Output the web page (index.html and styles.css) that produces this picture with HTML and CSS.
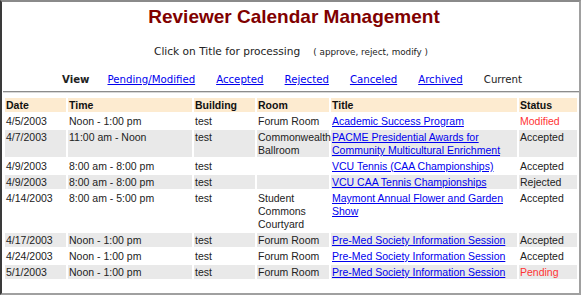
FILE: index.html
```html
<!DOCTYPE html>
<html>
<head>
<meta charset="utf-8">
<link rel="stylesheet" href="styles.css">
</head>
<body>
<div class="frame">
  <h1 class="title">Reviewer Calendar Management</h1>
  <p class="hint">Click on Title for processing<span class="small">( approve, reject, modify )</span></p>
  <div class="views">
    <b class="view-label">View</b>
    <a href="#">Pending/Modified</a>
    <a href="#">Accepted</a>
    <a href="#">Rejected</a>
    <a href="#">Canceled</a>
    <a href="#">Archived</a>
    <span class="current">Current</span>
  </div>
  <hr class="rule">
  <table class="events">
    <colgroup>
      <col class="c-date"><col class="c-time"><col class="c-bldg"><col class="c-room"><col class="c-title"><col class="c-status">
    </colgroup>
    <thead>
      <tr><th>Date</th><th>Time</th><th>Building</th><th>Room</th><th>Title</th><th>Status</th></tr>
    </thead>
    <tbody>
      <tr><td>4/5/2003</td><td>Noon - 1:00 pm</td><td>test</td><td>Forum Room</td><td><a href="#">Academic Success Program</a></td><td class="red">Modified</td></tr>
      <tr class="alt"><td>4/7/2003</td><td>11:00 am - Noon</td><td>test</td><td>Commonwealth Ballroom</td><td><a href="#">PACME Presidential Awards for Community Multicultural Enrichment</a></td><td>Accepted</td></tr>
      <tr><td>4/9/2003</td><td>8:00 am - 8:00 pm</td><td>test</td><td></td><td><a href="#">VCU Tennis (CAA Championships)</a></td><td>Accepted</td></tr>
      <tr class="alt"><td>4/9/2003</td><td>8:00 am - 8:00 pm</td><td>test</td><td></td><td><a href="#">VCU CAA Tennis Championships</a></td><td>Rejected</td></tr>
      <tr><td>4/14/2003</td><td>8:00 am - 5:00 pm</td><td>test</td><td>Student Commons Courtyard</td><td><a href="#">Maymont Annual Flower and Garden Show</a></td><td>Accepted</td></tr>
      <tr class="alt"><td>4/17/2003</td><td>Noon - 1:00 pm</td><td>test</td><td>Forum Room</td><td><a href="#">Pre-Med Society Information Session</a></td><td>Accepted</td></tr>
      <tr><td>4/24/2003</td><td>Noon - 1:00 pm</td><td>test</td><td>Forum Room</td><td><a href="#">Pre-Med Society Information Session</a></td><td>Accepted</td></tr>
      <tr class="alt"><td>5/1/2003</td><td>Noon - 1:00 pm</td><td>test</td><td>Forum Room</td><td><a href="#">Pre-Med Society Information Session</a></td><td class="red">Pending</td></tr>
    </tbody>
  </table>
</div>
</body>
</html>
```

FILE: styles.css
```css
html, body {
  margin: 0;
  padding: 0;
  background: #fff;
}

.frame {
  box-sizing: border-box;
  width: 581px;
  height: 295px;
  border-top: 2px solid #8a8a8a;
  border-left: 2px solid #3a3a3a;
  border-right: 2px solid #a0a0a0;
  border-bottom: 2px solid #a0a0a0;
  padding: 0 0 0 1px;
  overflow: hidden;
}

.title {
  margin: 3px 0 0;
  padding-left: 6px;
  font-family: "Liberation Sans", Arial, sans-serif;
  font-weight: bold;
  font-size: 19px;
  line-height: 24px;
  color: #800000;
  text-align: center;
}

.hint {
  margin: 15px 0 0;
  font-family: "DejaVu Sans", Verdana, sans-serif;
  font-size: 10.6px;
  line-height: 14px;
  color: #222;
  text-align: center;
}

.small {
  margin-left: 13px;
  font-size: 8.8px;
}

.views {
  margin: 14px 0 0;
  padding-left: 2px;
  display: flex;
  justify-content: center;
  gap: 21px;
  font-family: "DejaVu Sans", Verdana, sans-serif;
  font-size: 10.2px;
  line-height: 14px;
  color: #222;
}

.view-label {
  margin-right: -3px;
}

.views a {
  color: #0000ee;
}

.rule {
  margin: 4px 0 0;
  height: 0;
  border: 0;
  border-top: 1px solid #8c8c8c;
  border-bottom: 1px solid #d8d8d8;
}

.events {
  margin-top: 3px;
  width: 576px;
  table-layout: fixed;
  border-collapse: separate;
  border-spacing: 2px;
  font-family: "Liberation Sans", Arial, sans-serif;
  font-size: 10.5px;
  line-height: 13px;
  color: #222;
}

.c-date { width: 61px; }
.c-time { width: 124px; }
.c-bldg { width: 61px; }
.c-room { width: 72px; }
.c-title { width: 186px; }
.c-status { width: 58px; }

.events th,
.events td {
  padding: 1px 1px 0;
  text-align: left;
  vertical-align: top;
}

.events th {
  font-weight: bold;
  background: #fdebd0;
  color: #111;
}

.events tr.alt td {
  background: #e9e9e9;
}

.events a {
  color: #0000ee;
}

.events td.red {
  color: #ff3333;
}
```
